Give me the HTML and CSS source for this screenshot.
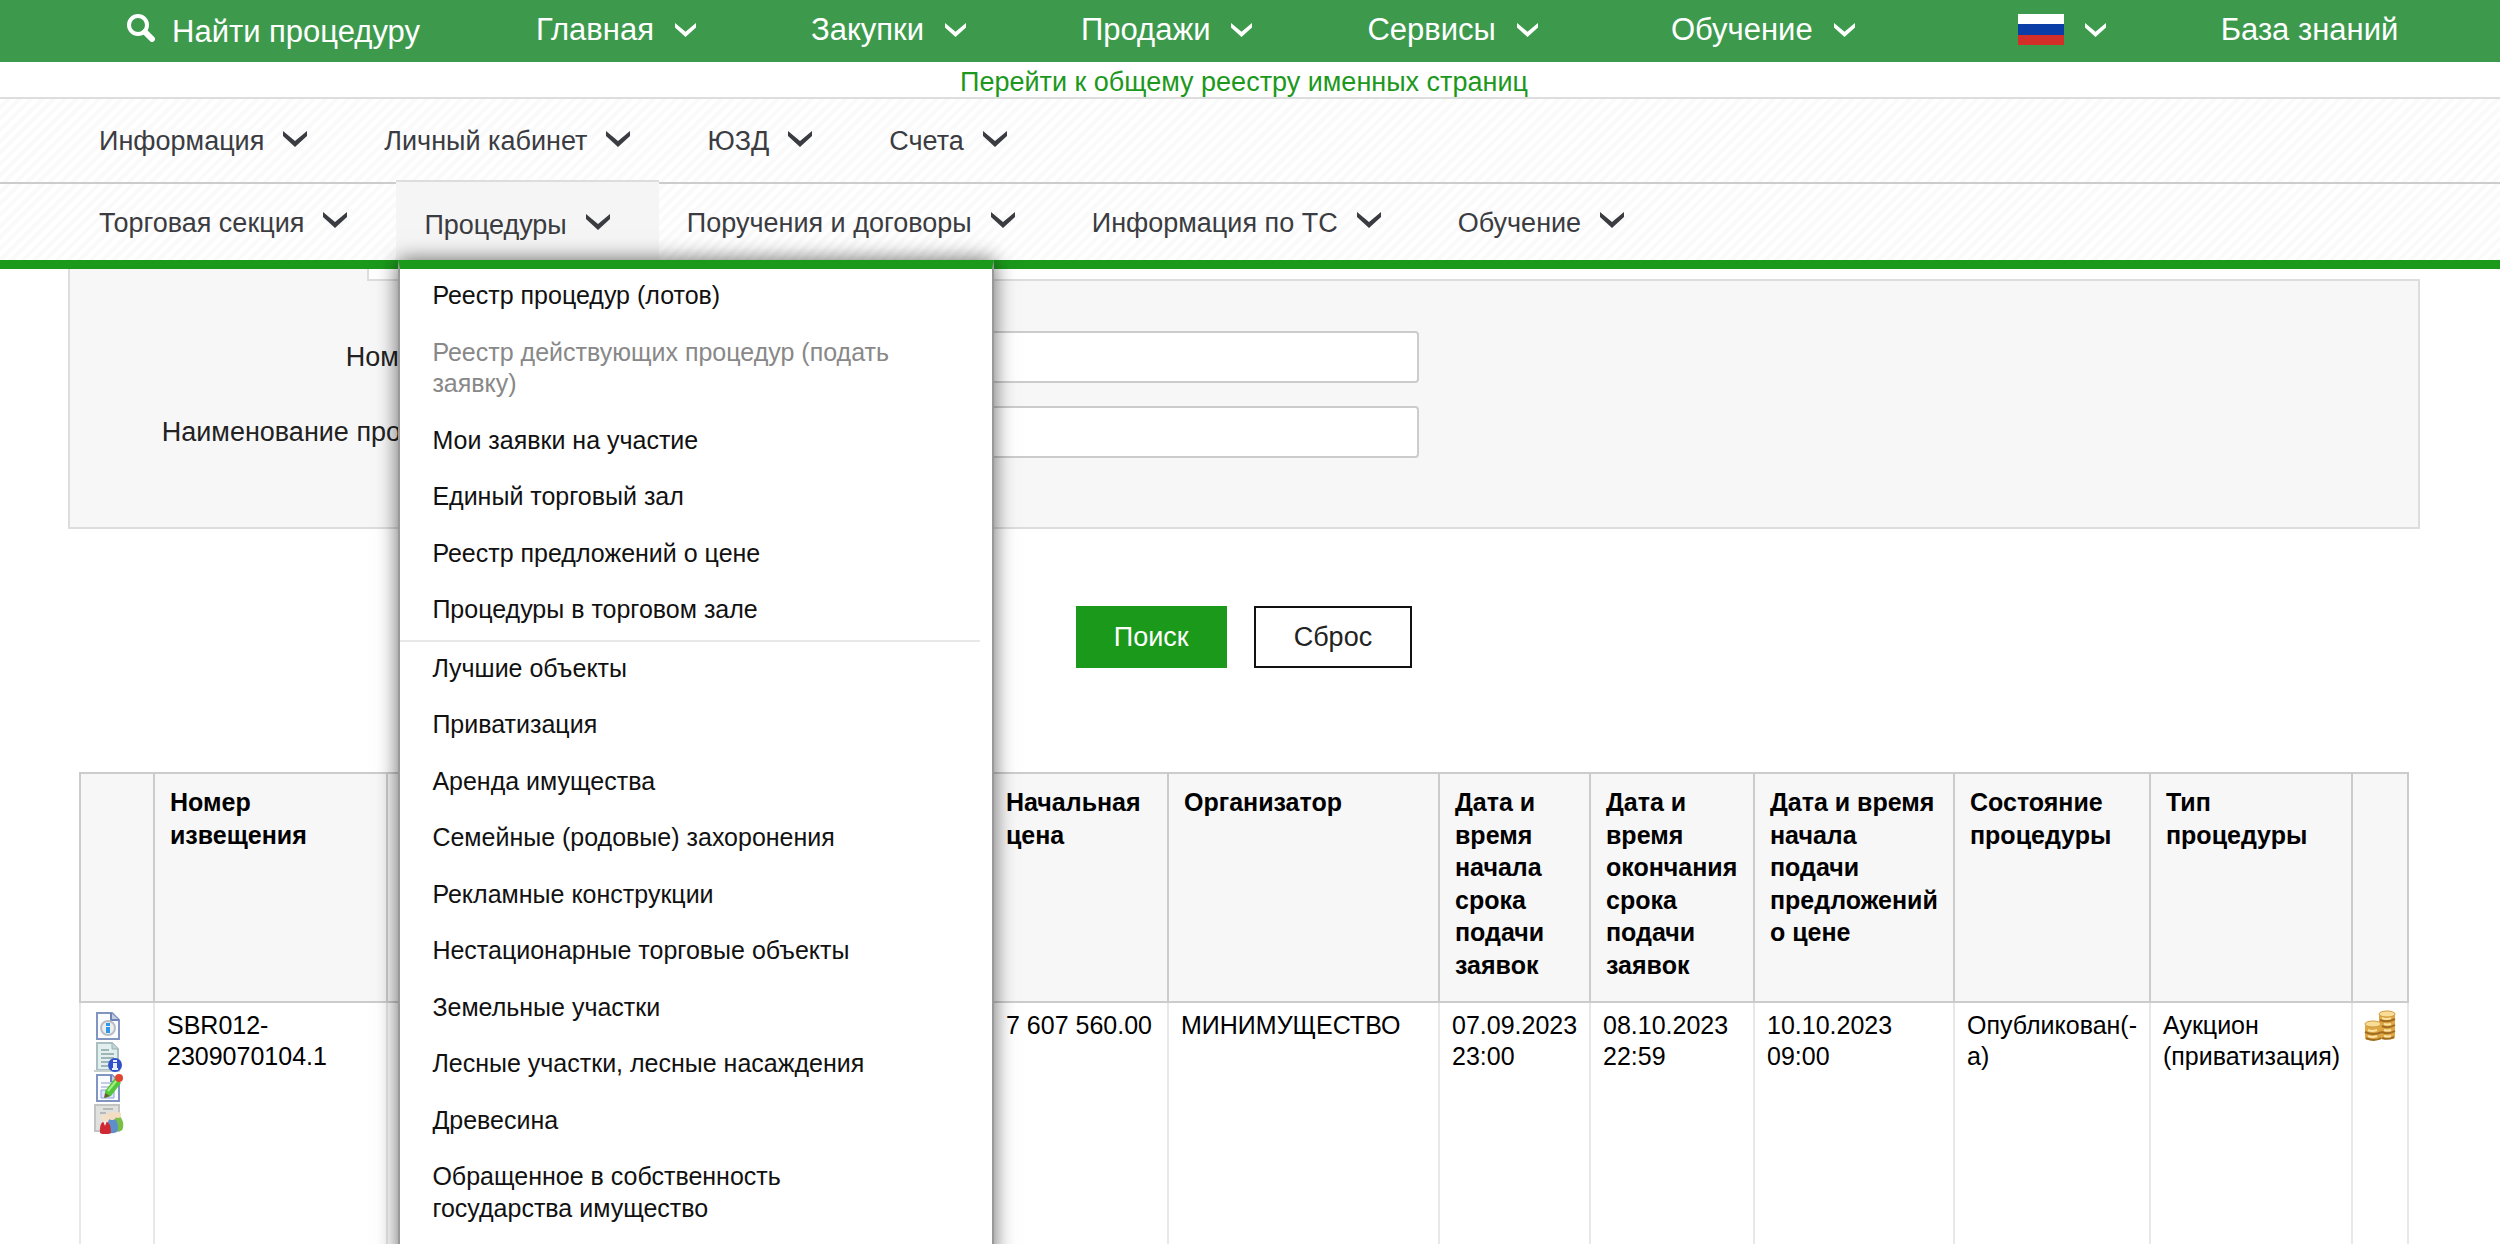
FILE: index.html
```html
<!DOCTYPE html>
<html lang="ru">
<head>
<meta charset="utf-8">
<title>Реестр процедур</title>
<link rel="stylesheet" href="styles.css">
</head>
<body>
<svg class="sprite" aria-hidden="true">
  <symbol id="chevron" viewBox="0 0 24 16"><path d="M0 0l12 10L24 0v5L12 16 0 5z" fill="currentColor"/></symbol>
  <symbol id="sheet" viewBox="0 0 32 30"><path d="M4 2h15l7 7v19H4z" fill="#fafcff" stroke="#8195c0" stroke-width="2"/><path d="M18 2v7h8" fill="#c3cfe6" stroke="#6f84b4" stroke-width="2"/></symbol>
</svg>

<header class="topbar">
  <a class="top-search" href="#"><svg class="icon-search" viewBox="0 0 28 28"><circle cx="11" cy="11" r="9" fill="none" stroke="currentColor" stroke-width="4"/><path d="M18 18l7 7" stroke="currentColor" stroke-width="6" stroke-linecap="round"/></svg>Найти процедуру</a>
  <nav class="top-nav">
    <a href="#">Главная<svg class="chev-top"><use href="#chevron"/></svg></a>
    <a href="#">Закупки<svg class="chev-top"><use href="#chevron"/></svg></a>
    <a href="#">Продажи<svg class="chev-top"><use href="#chevron"/></svg></a>
    <a href="#">Сервисы<svg class="chev-top"><use href="#chevron"/></svg></a>
    <a class="top-learn" href="#">Обучение<svg class="chev-top"><use href="#chevron"/></svg></a>
    <a class="top-lang" href="#" aria-label="Русский"><span class="flag"></span><svg class="chev-top"><use href="#chevron"/></svg></a>
    <a href="#">База знаний</a>
  </nav>
</header>

<div class="registry"><a href="#">Перейти к общему реестру именных страниц</a></div>

<nav class="menu menu-common">
  <a href="#">Информация<svg class="chev"><use href="#chevron"/></svg></a>
  <a href="#">Личный кабинет<svg class="chev"><use href="#chevron"/></svg></a>
  <a href="#">ЮЗД<svg class="chev"><use href="#chevron"/></svg></a>
  <a href="#">Счета<svg class="chev"><use href="#chevron"/></svg></a>
</nav>
<nav class="menu menu-section">
  <a href="#">Торговая секция<svg class="chev"><use href="#chevron"/></svg></a>
  <div class="menu-open">
    <a href="#">Процедуры<svg class="chev"><use href="#chevron"/></svg></a>
    <div class="dropdown">
      <ul>
        <li><a href="#">Реестр процедур (лотов)</a></li>
        <li><a class="muted" href="#">Реестр действующих процедур (подать заявку)</a></li>
        <li><a href="#">Мои заявки на участие</a></li>
        <li><a href="#">Единый торговый зал</a></li>
        <li><a href="#">Реестр предложений о цене</a></li>
        <li><a href="#">Процедуры в торговом зале</a></li>
      </ul>
      <ul>
        <li><a href="#">Лучшие объекты</a></li>
        <li><a href="#">Приватизация</a></li>
        <li><a href="#">Аренда имущества</a></li>
        <li><a href="#">Семейные (родовые) захоронения</a></li>
        <li><a href="#">Рекламные конструкции</a></li>
        <li><a href="#">Нестационарные торговые объекты</a></li>
        <li><a href="#">Земельные участки</a></li>
        <li><a href="#">Лесные участки, лесные насаждения</a></li>
        <li><a href="#">Древесина</a></li>
        <li><a href="#">Обращенное в собственность государства имущество</a></li>
      </ul>
    </div>
  </div>
  <a href="#">Поручения и договоры<svg class="chev"><use href="#chevron"/></svg></a>
  <a href="#">Информация по ТС<svg class="chev"><use href="#chevron"/></svg></a>
  <a href="#">Обучение<svg class="chev"><use href="#chevron"/></svg></a>
</nav>

<main class="page">
  <form>
    <div class="tabs"><span class="tab"></span><span class="tabs-rest"></span></div>
    <div class="filter">
      <label for="number">Номер лота</label><input id="number" type="text">
      <label for="name">Наименование процедуры</label><input id="name" type="text">
    </div>
    <div class="actions">
      <button class="btn btn-primary" type="submit">Поиск</button>
      <button class="btn" type="reset">Сброс</button>
    </div>
  </form>

  <table class="lots">
    <colgroup><col class="c-icons"><col class="c-number"><col><col class="c-price"><col class="c-org"><col class="c-start"><col class="c-end"><col class="c-offers"><col class="c-state"><col class="c-type"><col class="c-coins"></colgroup>
    <thead>
      <tr>
        <th></th>
        <th>Номер извещения</th>
        <th></th>
        <th>Начальная цена</th>
        <th>Организатор</th>
        <th>Дата и время начала срока подачи заявок</th>
        <th>Дата и время окончания срока подачи заявок</th>
        <th>Дата и время начала подачи предложений о цене</th>
        <th>Состояние процедуры</th>
        <th>Тип процедуры</th>
        <th></th>
      </tr>
    </thead>
    <tbody>
      <tr>
        <td>
          <svg class="row-icon" viewBox="0 0 32 30"><use href="#sheet"/><circle cx="15" cy="17" r="7" fill="#eceef0" stroke="#b9bec6" stroke-width="2"/><path d="M13 12h4v3h-4zM13 16h4v6h-4z" fill="#2f97e8"/></svg>
          <svg class="row-icon" viewBox="0 0 32 30"><path d="M4 1h15l6 6v21H4z" fill="#e2efee" stroke="#a9bfc2" stroke-width="2"/><path d="M19 1v6h6" fill="#c3d6d6" stroke="#9bb2b5"/><path d="M8 8h8M8 12h13M8 16h13M8 20h8M8 24h7" stroke="#9cb5b6" stroke-width="2"/><path d="M1 29h26" stroke="#c9d0d0" stroke-width="2"/><circle cx="22" cy="23" r="7" fill="#2f4fc8"/><path d="M20 18h4v2h-4zM20 21h4v5h1v2h-6v-2h1z" fill="#e8eeff"/></svg>
          <svg class="row-icon" viewBox="0 0 32 30"><use href="#sheet"/><path d="M8 10h11M8 14h8" stroke="#c4cde8" stroke-width="2"/><path d="M8 17h13v8H8z" fill="#dfe6fb" stroke="#8fa0dc"/><path d="M12 18l10-13 6 5-10 13-6 2z" fill="#54c63c"/><path d="M12 20l5 3-6 2z" fill="#6b5a32"/><path d="M15 18l9-11" stroke="#a4ef86" stroke-width="2"/><circle cx="26" cy="5" r="4" fill="#e2452f"/></svg>
          <svg class="row-icon" viewBox="0 0 32 30"><path d="M2 1h24v26H2z" fill="#e0e0de" stroke="#c2c4c2" stroke-width="2"/><path d="M10 5h10M7 9h6" stroke="#b5b9b7" stroke-width="2"/><path d="M21 27V17q1-5 4-5t5 6q1 7-2 9z" fill="#78bf45"/><circle cx="25" cy="11" r="3" fill="#f3dcc0"/><path d="M15 29V18q1-4 4-4t5 4q2 6 0 10-4 2-9 1z" fill="#5f8fca"/><circle cx="19" cy="12" r="4" fill="#f3dcc0"/><path d="M7 29q-1-11 5-12 6 1 6 12-6 3-11 0z" fill="#cf2a33"/><circle cx="12" cy="14" r="4" fill="#f5dfc6"/><path d="M10 17h4l-2 5z" fill="#f7ece0"/></svg>
        </td>
        <td>SBR012-2309070104.1</td>
        <td></td>
        <td class="num">7 607 560.00</td>
        <td>МИНИМУЩЕСТВО</td>
        <td>07.09.2023 23:00</td>
        <td>08.10.2023 22:59</td>
        <td>10.10.2023 09:00</td>
        <td>Опубликован(-а)</td>
        <td>Аукцион (приватизация)</td>
        <td class="coin-cell">
          <svg class="coins" viewBox="0 0 32 32"><g fill="#dfa744"><rect x="15" y="3" width="16" height="26" rx="3"/><rect x="1" y="14" width="17" height="16" rx="3"/></g><g fill="none" stroke="#a06c20" stroke-width="2"><path d="M16 10q7 3 15-1M18 16q6 3 13-1M18 22q6 3 13-1M18 28q6 2 12-1M1 22q8 4 17 0M2 28q8 4 15 0"/></g><g fill="none" stroke="#fae3a2" stroke-width="2"><path d="M18 8q5 2 9 0M20 14q4 1 7 0M20 20q4 1 7 0M20 26q4 1 7 0M4 20q4 2 9 0M4 26q4 2 9 0"/></g><ellipse cx="23" cy="4" rx="8" ry="3" fill="#f7dd96" stroke="#d09a3e"/><ellipse cx="9" cy="14" rx="8" ry="3" fill="#f7dd96" stroke="#d09a3e"/></svg>
        </td>
      </tr>
    </tbody>
  </table>
</main>
</body>
</html>
```
FILE: styles.css
```css
* { box-sizing: border-box; }

body {
  margin: 0;
  background: #fff;
  color: #000;
  font: 27px/31px "Liberation Sans", Arial, sans-serif;
  overflow-x: hidden;
}

a { color: inherit; text-decoration: none; }
.sprite { display: none; }

/* Green bar */
.topbar {
  display: flex;
  align-items: center;
  gap: 116px;
  height: 62px;
  padding: 0 100px 0 127px;
  background: #3d9a4d;
  color: #fff;
  font-size: 31px;
  white-space: nowrap;
}
.top-search { display: flex; align-items: center; gap: 17px; }
.icon-search { width: 28px; height: 28px; margin-bottom: 6px; }
.top-nav { display: flex; gap: 115px; padding-bottom: 3px; }
.top-nav a { display: flex; align-items: center; gap: 21px; }
.top-learn { margin-left: 18px; }
.top-lang { margin-left: 48px; }
.chev-top { width: 21px; height: 14px; }
.flag {
  width: 46px;
  height: 31px;
  background: linear-gradient(#fff 0 10px, #0a3da5 10px 21px, #d42e28 21px);
}

.registry {
  height: 35px;
  padding: 5px 12px 0 0;
  color: #1c981c;
  text-align: center;
}

/* Two rows of sections */
.menu {
  display: flex;
  padding-left: 71px;
  border-top: 2px solid #ddd;
  background: repeating-linear-gradient(135deg, #fff 0 4px, #fafafa 4px 8px);
  color: #3b3c41;
  white-space: nowrap;
}
.menu-common { height: 85px; }
.menu-section { height: 87px; border-top-color: #ccc; border-bottom: 9px solid #1b991b; }
.menu > a, .menu-open > a {
  display: flex;
  align-items: center;
  gap: 19px;
  padding: 2px 49px 0 28px;
}
.chev { width: 24px; height: 16px; margin-bottom: 6px; }
.menu-open {
  position: relative;
  display: flex;
  margin-top: -4px;
  border-top: 2px solid #ddd;
  background: #f5f5f5;
}
.menu .menu-open > a { padding-top: 8px; }

.dropdown {
  position: absolute;
  top: 100%;
  left: 2px;
  z-index: 1;
  width: 596px;
  padding: 0 12px 20px 0;
  border: 2px solid #999;
  border-top: 9px solid #1b991b;
  background: #fff;
  box-shadow: 0 0 20px rgba(0, 0, 0, .6);
  color: #111;
  font-size: 25px;
  line-height: 1.26;
  white-space: normal;
}
.dropdown ul { margin: 0; padding: 0; list-style: none; }
.dropdown ul + ul { border-top: 2px solid #e8e8e8; }
.dropdown li a { display: block; padding: 11px 60px 14px 32px; }
.dropdown .muted { color: #888; }

/* Search form */
.page { padding: 0 80px 0 68px; }
.tabs { display: flex; height: 12px; }
.tab { width: 299px; border-left: 2px solid #ddd; background: #f7f7f7; }
.tabs-rest { flex: 1; border: solid #ddd; border-width: 0 0 2px 2px; }
.filter {
  display: grid;
  grid-template-columns: 424px 925px;
  row-gap: 23px;
  align-items: center;
  padding: 50px 0 69px;
  border: solid #ddd;
  border-width: 0 2px 2px;
  background: #f7f7f7;
  color: #222;
}
.filter label { text-align: right; }
.filter input {
  height: 52px;
  margin-left: 30px;
  border: 2px solid #ccc;
  border-radius: 4px;
  background: #fff;
  font: inherit;
}
.actions {
  display: flex;
  justify-content: center;
  gap: 27px;
  margin: 77px 0 104px;
}
.btn {
  height: 62px;
  padding: 0 38px;
  border: 2px solid #111;
  background: #fff;
  color: #222;
  font: inherit;
}
.btn-primary { padding: 0 36px; border-color: #1b991b; background: #1b991b; color: #fff; }

/* Lots */
.lots {
  width: calc(100% - 22px);
  margin-left: 11px;
  border-collapse: collapse;
  table-layout: fixed;
  font-size: 25px;
  line-height: 1.25;
}
.c-icons { width: 74px; }
.c-number { width: 233px; }
.c-price { width: 178px; }
.c-org { width: 271px; }
.c-start { width: 151px; }
.c-end { width: 164px; }
.c-offers { width: 200px; }
.c-state { width: 196px; }
.c-type { width: 202px; }
.c-coins { width: 56px; }
.lots th {
  height: 229px;
  padding: 12px 12px 12px 15px;
  border: 2px solid #ccc;
  background: #f7f7f7;
  line-height: 1.3;
  text-align: left;
  vertical-align: top;
}
.lots td {
  height: 290px;
  padding: 7px 6px 7px 12px;
  border: 2px solid #e8e8e8;
  border-top-color: #ccc;
  vertical-align: top;
}
.lots .num { padding-right: 15px; text-align: right; white-space: nowrap; }
.lots .coin-cell { padding-left: 11px; }
.row-icon { display: block; width: 32px; height: 30px; margin-top: 1px; }
.coins { display: block; width: 32px; height: 32px; }
```
